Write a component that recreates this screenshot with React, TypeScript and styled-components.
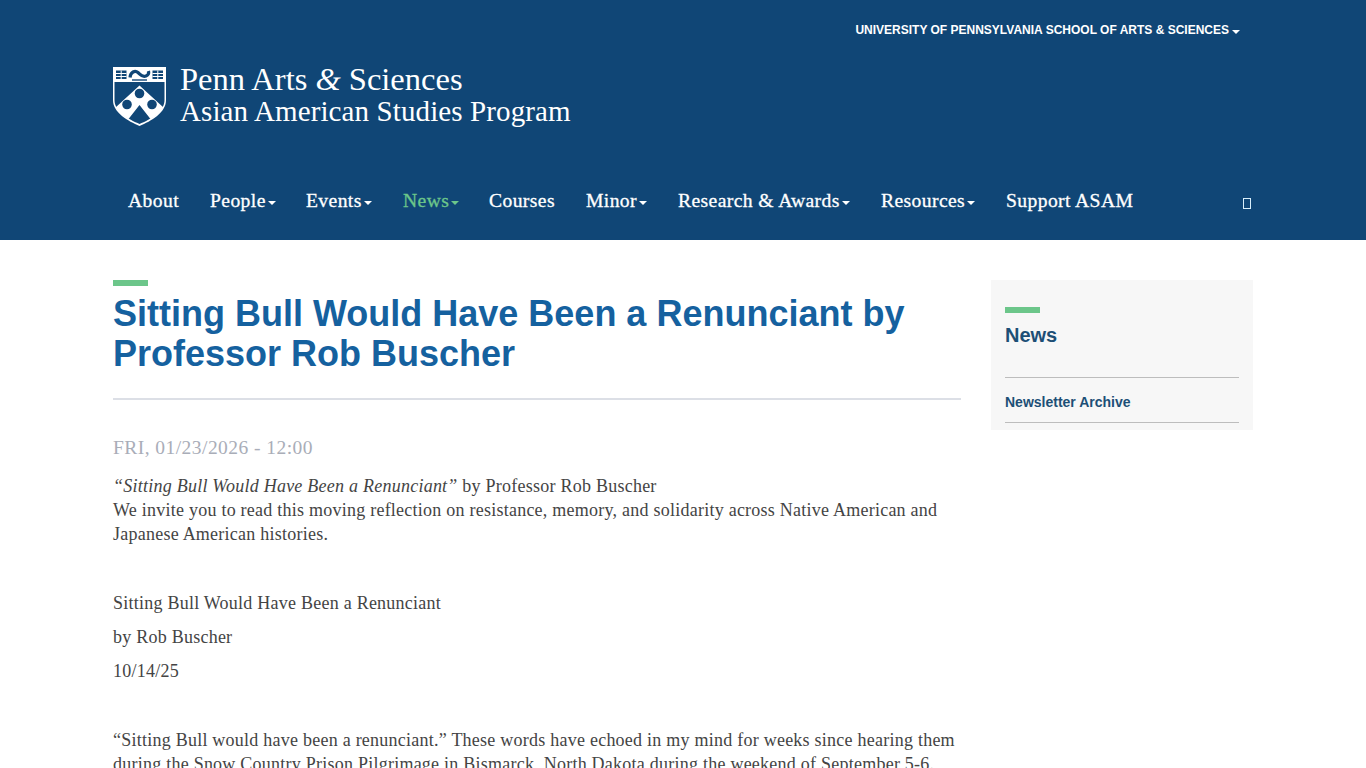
import React from "react";
import styled, { createGlobalStyle } from "styled-components";

const Global = createGlobalStyle`
  html, body { margin: 0; padding: 0; background: #fff; overflow: hidden; height: 768px; }
  body { font-family: "Liberation Serif", serif; }
  * { box-sizing: border-box; }
`;

const Header = styled.header`
  background: #104676;
  height: 240px;
  padding: 0 113px;
  display: flex;
  flex-direction: column;
`;
const TopBar = styled.div`
  height: 60px;
  padding: 23px 13px 0 0;
  display: flex;
  justify-content: flex-end;
  align-items: flex-start;
`;
const SchoolLink = styled.a`
  font: bold 12px/14px "Liberation Sans", sans-serif;
  color: #fff;
  display: flex;
  align-items: center;
  gap: 3px;
`;
const Brand = styled.div`
  display: flex;
  align-items: flex-start;
  gap: 14px;
  height: 110px;
  padding-top: 7px;
`;
const BrandText = styled.div`
  color: #fff;
  font-family: "Liberation Serif", serif;
  margin-top: -1px;
`;
const BrandTop = styled.div`
  font-size: 32.5px;
  line-height: 27px;
  letter-spacing: 0;
  white-space: nowrap;
  em { font-style: italic; }
`;
const BrandBottom = styled.div`
  font-size: 29px;
  line-height: 37px;
  letter-spacing: 0.11px;
  white-space: nowrap;
`;
const Nav = styled.nav`
  display: flex;
  align-items: center;
  height: 40px;
  margin-top: 11px;
  position: relative;
`;
const NavItem = styled.a<{ $active?: boolean; $w: number }>`
  font: 400 19.6px/24px "Liberation Serif", serif;
  color: ${(p) => (p.$active ? "#6cc68a" : "#fff")};
  display: flex;
  align-items: center;
  padding-left: 15px;
  width: ${(p) => p.$w}px;
  white-space: nowrap;
  letter-spacing: 0.4px;
  -webkit-text-stroke: 0.3px currentColor;
`;
const Caret = styled.span`
  display: inline-block;
  width: 0;
  height: 0;
  border-left: 4px solid transparent;
  border-right: 4px solid transparent;
  border-top: 4px solid currentColor;
  margin-top: 3px;
`;
const NavCaret = styled(Caret)`
  margin-left: 2px;
`;
const Missing = styled.span`
  position: absolute;
  right: 2px;
  top: 17px;
  width: 8px;
  height: 11px;
  border: 1px solid #d8eefa;
`;
const Content = styled.div`
  padding: 40px 113px 0;
  display: flex;
  gap: 30px;
  align-items: flex-start;
`;
const Main = styled.main`
  width: 848px;
`;
const Accent = styled.div`
  width: 35px;
  height: 6px;
  background: #6cc68a;
`;
const Title = styled.h1`
  margin: 8px 0 0;
  font: bold 36px/40px "Liberation Sans", sans-serif;
  color: #15619f;
  padding-bottom: 24px;
  border-bottom: 2px solid #dcdfe6;
`;
const DateLine = styled.div`
  margin-top: 36px;
  font-size: 19.5px;
  line-height: 24px;
  letter-spacing: 0.45px;
  color: #a9adb8;
`;
const Body = styled.div`
  margin-top: 14px;
  font-size: 18px;
  line-height: 24px;
  color: #444;
  letter-spacing: 0.24px;
`;
const Para = styled.p<{ $mt?: number }>`
  margin: ${(p) => p.$mt ?? 0}px 0 0;
`;
const Side = styled.aside`
  width: 262px;
  background: #f7f7f7;
  padding: 27px 14px 7px;
`;
const SideTitle = styled.h2`
  margin: 8px 0 28px;
  font: bold 20px/28px "Liberation Sans", sans-serif;
  color: #1d4f76;
`;
const SideLink = styled.a`
  display: block;
  border-top: 1px solid #bdbdbd;
  border-bottom: 1px solid #bdbdbd;
  padding: 16px 0 12px;
  font: bold 14px/16px "Liberation Sans", sans-serif;
  color: #1d4f76;
`;

const Shield = () => (
  <svg width="53" height="59" viewBox="0 0 53 59">
    <path fill="#fff" d="M0 0H53V33C53 46 38 54 26.5 59C15 54 0 46 0 33Z" />
    <path fill="#104676" d="M1.5 15H51.5V33C51.5 45 37 52.5 26.5 57C16 52.5 1.5 45 1.5 33Z" />
    <path fill="#fff" d="M26.5 18.5L50.5 40.5C47 46 42 49.5 37.5 52L26.5 38L15.5 52C11 49.5 6 46 2.5 40.5Z" />
    <circle cx="26.5" cy="26.5" r="4.8" fill="#104676" />
    <circle cx="14" cy="37.5" r="4.8" fill="#104676" />
    <circle cx="39" cy="37.5" r="4.8" fill="#104676" />
    <path fill="#104676" d="M3 3.5H13.5V12H3ZM39.5 3.5H50V12H39.5Z" />
    <path stroke="#fff" strokeWidth="1" d="M8.2 3.5V12M3 6.5H13.5M3 9.5H13.5M44.8 3.5V12M39.5 6.5H50M39.5 9.5H50" />
    <path fill="none" stroke="#104676" strokeWidth="3.2" d="M17 10.5C17.5 5 22 3 25 5.5C28 8 29 10.5 33 9C35.5 8 36 6 35.5 4" />
    <path fill="none" stroke="#104676" strokeWidth="1.4" d="M19 13H34" />
  </svg>
);

const items: [string, boolean, number, boolean?][] = [
  ["About", false, 82],
  ["People", true, 96],
  ["Events", true, 97],
  ["News", true, 86, true],
  ["Courses", false, 97],
  ["Minor", true, 92],
  ["Research & Awards", true, 203],
  ["Resources", true, 125],
  ["Support ASAM", false, 156],
];

export default function App() {
  return (
    <>
      <Global />
      <Header>
        <TopBar>
          <SchoolLink>
            UNIVERSITY OF PENNSYLVANIA SCHOOL OF ARTS &amp; SCIENCES
            <Caret />
          </SchoolLink>
        </TopBar>
        <Brand>
          <Shield />
          <BrandText>
            <BrandTop>Penn Arts <em>&amp;</em> Sciences</BrandTop>
            <BrandBottom>Asian American Studies Program</BrandBottom>
          </BrandText>
        </Brand>
        <Nav>
          {items.map(([label, caret, w, active]) => (
            <NavItem key={label} $w={w} $active={active}>
              {label}
              {caret && <NavCaret />}
            </NavItem>
          ))}
          <Missing />
        </Nav>
      </Header>
      <Content>
        <Main>
          <Accent />
          <Title>Sitting Bull Would Have Been a Renunciant by Professor Rob Buscher</Title>
          <DateLine>FRI, 01/23/2026 - 12:00</DateLine>
          <Body>
            <Para>
              <em>“Sitting Bull Would Have Been a Renunciant”</em> by Professor Rob Buscher
              <br />
              We invite you to read this moving reflection on resistance, memory, and solidarity across Native American and Japanese American histories.
            </Para>
            <Para $mt={45}>Sitting Bull Would Have Been a Renunciant</Para>
            <Para $mt={10}>by Rob Buscher</Para>
            <Para $mt={10}>10/14/25</Para>
            <Para $mt={45}>
              “Sitting Bull would have been a renunciant.” These words have echoed in my mind for weeks since hearing them during the Snow Country Prison Pilgrimage in Bismarck, North Dakota during the weekend of September 5-6.
            </Para>
          </Body>
        </Main>
        <Side>
          <Accent />
          <SideTitle>News</SideTitle>
          <SideLink>Newsletter Archive</SideLink>
        </Side>
      </Content>
    </>
  );
}
